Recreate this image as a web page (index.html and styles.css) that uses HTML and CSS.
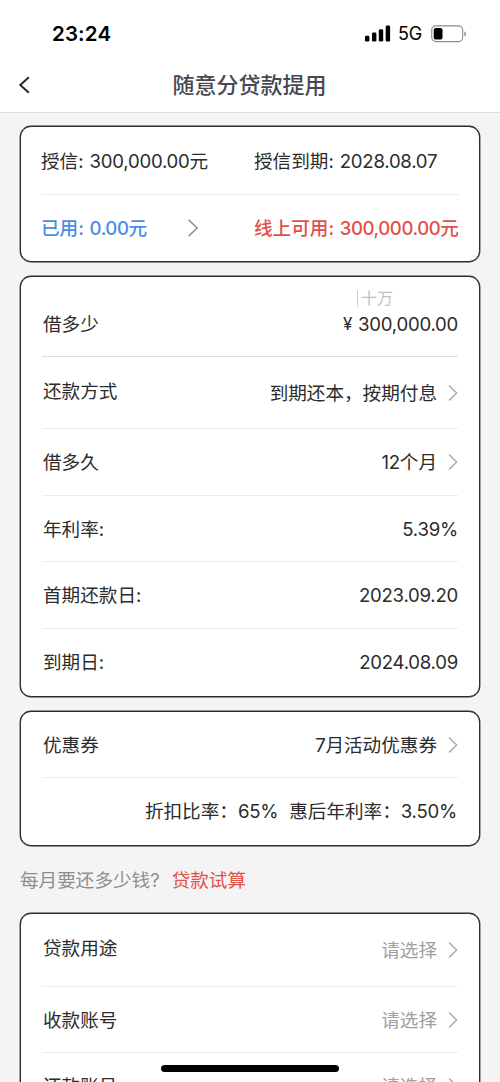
FILE: index.html
```html
<!DOCTYPE html>
<html lang="zh-CN">
<head>
<meta charset="utf-8">
<title>随意分贷款提用</title>
<link rel="stylesheet" href="styles.css">
</head>
<body>
<svg class="defs" width="0" height="0"><defs>
  <symbol id="chevron" viewBox="0 0 10 18"><path d="M1 1.5 8.7 9 1 16.5" fill="none" stroke="currentColor" stroke-width="1.3"/></symbol>
</defs></svg>
<div class="screen">
  <header class="header">
    <div class="status">
      <span class="time">23:24</span>
      <span class="indicators">
        <svg class="signal" width="26" height="17" viewBox="0 0 26 17"><rect x="0" y="10.7" width="4.4" height="5.8" rx="1.3"/><rect x="7" y="7.6" width="4.4" height="8.9" rx="1.3"/><rect x="13.8" y="4.2" width="4.4" height="12.3" rx="1.3"/><rect x="20.7" y="0.6" width="4.4" height="15.9" rx="1.3"/></svg>
        <span class="network">5G</span>
        <svg class="battery" width="36" height="18" viewBox="0 0 36 18"><rect x="0.7" y="0.9" width="31" height="15.7" rx="4.3" fill="none" stroke="#8c8c8c" stroke-width="1.1"/><rect x="2.7" y="3" width="8.8" height="11.6" rx="2.2"/><path d="M33.3 6.2q1.8 1 1.8 2.7t-1.8 2.7z" fill="#8c8c8c"/></svg>
      </span>
    </div>
    <nav class="nav">
      <svg class="back" width="12" height="18" viewBox="0 0 12 18"><path d="M10.8 1.2 2.3 9l8.5 7.8" fill="none" stroke="#29292d" stroke-width="2"/></svg>
      <h1 class="title">随意分贷款提用</h1>
    </nav>
  </header>
  <main class="content">
    <section class="card summary">
      <div class="row r68"><span class="left">授信: <span class="num">300,000.00</span>元</span><span>授信到期: <span class="num">2028.08.07</span></span></div>
      <div class="row r66 strong"><span class="left used">已用: <span class="num">0.00</span>元<svg class="chevron dark" width="12" height="20"><use href="#chevron"/></svg></span><span class="available">线上可用: <span class="num">300,000.00</span>元</span></div>
    </section>
    <section class="card details">
      <div class="row r80 amount"><span class="label">借多少</span><span class="value"><span class="unit">十万</span><span class="yen">¥</span><span class="num">300,000.00</span></span></div>
      <div class="row r72"><span class="label raised">还款方式</span><span class="value">到期还本，按期付息<svg class="chevron"><use href="#chevron"/></svg></span></div>
      <div class="row r67"><span class="label">借多久</span><span class="value"><span class="num">12</span>个月<svg class="chevron"><use href="#chevron"/></svg></span></div>
      <div class="row r66"><span class="label">年利率:</span><span class="value num">5.39%</span></div>
      <div class="row r67"><span class="label">首期还款日:</span><span class="value num">2023.09.20</span></div>
      <div class="row r67"><span class="label">到期日:</span><span class="value num">2024.08.09</span></div>
    </section>
    <section class="card coupon">
      <div class="row r66"><span class="label">优惠券</span><span class="value"><span class="num">7</span>月活动优惠券<svg class="chevron"><use href="#chevron"/></svg></span></div>
      <div class="row r67 discount"><span>折扣比率：<span class="num">65%</span></span><span>惠后年利率：<span class="num">3.50%</span></span></div>
    </section>
    <p class="trial"><span>每月要还多少钱?</span><a class="link">贷款试算</a></p>
    <section class="card accounts">
      <div class="row r73"><span class="label raised">贷款用途</span><span class="value muted">请选择<svg class="chevron"><use href="#chevron"/></svg></span></div>
      <div class="row r66"><span class="label">收款账号</span><span class="value muted">请选择<svg class="chevron"><use href="#chevron"/></svg></span></div>
      <div class="row r67"><span class="label">还款账号</span><span class="value muted">请选择<svg class="chevron"><use href="#chevron"/></svg></span></div>
    </section>
  </main>
  <div class="home-indicator"></div>
</div>
</body>
</html>
```
FILE: styles.css
```css
* { box-sizing: border-box; }
body {
  margin: 0;
  background: #f4f4f4;
  color: #2c2c2c;
  font: 18.6px/26px Inter, "Noto Sans CJK SC", sans-serif;
}
.defs { display: block; }
.screen { position: relative; height: 1082px; overflow: hidden; }
.header { height: 113px; background: #fff; border-bottom: 1px solid #dedede; }
.status { height: 58px; padding: 9px 33px 0 52px; display: flex; align-items: center; justify-content: space-between; color: #000; }
.time { font-size: 20.5px; font-weight: 600; letter-spacing: .15px; }
.indicators { display: flex; align-items: center; }
.network { margin-left: 7px; font-size: 18px; letter-spacing: -.2px; }
.battery { margin-left: 9px; }
.nav { height: 54px; padding: 0 18px; display: flex; align-items: center; }
.title { flex: 1; margin: 0 13px 0 0; text-align: center; font-size: 22px; font-weight: 500; color: #484852; }
.content { padding: 13px 20px 0; }
.card { background: #fff; border: 1px solid #2d2d2d; box-shadow: 0 0 0 .4px #2d2d2d; border-radius: 11px; padding: 0 21px; margin-bottom: 14px; }
.summary { padding: 0 20px; }
.row { display: flex; align-items: center; justify-content: space-between; border-bottom: 1px solid #ececec; white-space: nowrap; }
.row:last-child { border-bottom-color: transparent; }
.r66 { height: 66px; }
.r67 { height: 67px; }
.r68 { height: 68px; }
.r72 { height: 72px; }
.r73 { height: 73px; }
.r80 { height: 80px; }
.summary .row { justify-content: flex-start; }
.summary .num { margin-left: .8px; }
.left { width: 213px; display: block; }
.label { padding-left: 1px; }
.num { letter-spacing: -.25px; }
.strong { font-weight: 500; }
.strong .num { letter-spacing: -.45px; }
.used { display: flex; align-items: center; white-space: pre; color: #4a8de8; }
.available { color: #e2504a; }
.chevron { width: 10px; height: 18px; margin-left: 11px; color: #a5a5a5; flex: none; }
.chevron.dark { width: 12px; height: 20px; margin-left: 40px; color: #8c8c8c; }
.value { display: flex; align-items: center; justify-content: flex-end; }
.raised { margin-bottom: 4px; }
.amount { align-items: flex-end; padding-bottom: 19px; border-bottom-color: #dcdcdc; }
.amount .value { position: relative; }
.unit { position: absolute; left: 14px; bottom: 30px; height: 17px; padding-left: 3px; border-left: 1px solid #cfcfcf; font-size: 16px; line-height: 16px; color: #c2c2c2; }
.yen { width: 15px; font-size: 17px; }
.discount { justify-content: flex-end; gap: 11px; padding-right: 1px; }
.trial { display: flex; gap: 12px; margin: 0; height: 53px; padding-top: 7px; color: #8e8e8e; }
.link { color: #e2504a; }
.muted { color: #a0a0a0; }
.home-indicator { position: absolute; left: 161px; top: 1065px; width: 178px; height: 7px; border-radius: 4px; background: #000; }
```
